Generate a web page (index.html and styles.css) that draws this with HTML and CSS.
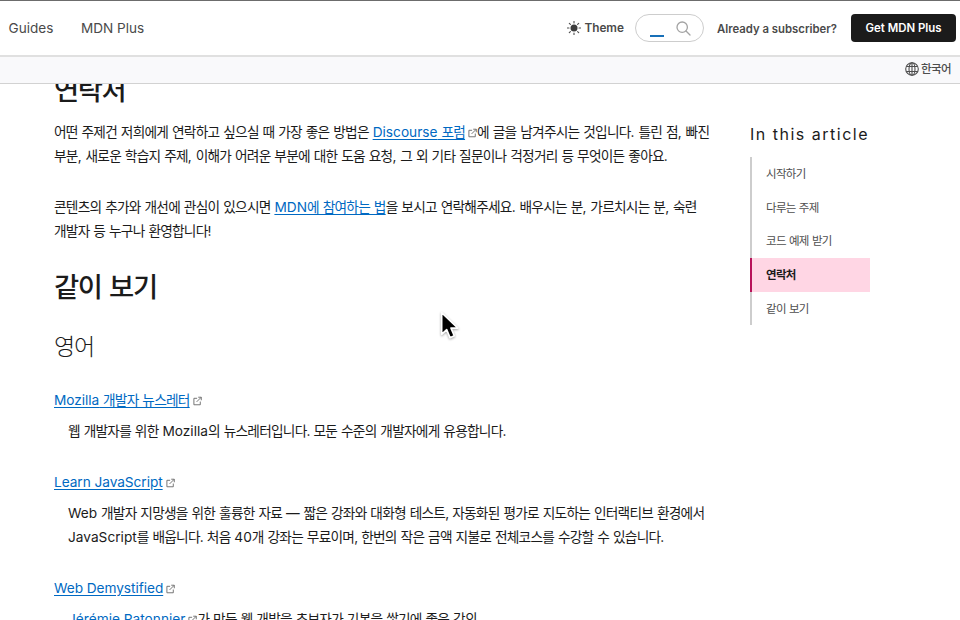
FILE: index.html
```
<!DOCTYPE html>
<html lang="ko">
<head>
<meta charset="utf-8">
<title>MDN Web Docs</title>
<link rel="stylesheet" href="styles.css">
</head>
<body>
<svg class="defs" width="0" height="0" aria-hidden="true">
  <symbol id="ext" viewBox="0 0 10 10"><path d="M4.6 2H1v7.2h7.1V5.6M5.8.8h3.4v3.4M9 1 4 6" fill="none" stroke="#686868" stroke-width="1"/></symbol>
</svg>
<header class="top">
  <nav class="nav"><a>Guides</a><a>MDN Plus</a></nav>
  <div class="actions">
    <button class="theme">
      <svg width="14" height="14" viewBox="0 0 14 14"><circle cx="7" cy="7" r="3.5" fill="#3d3d3d"/><path d="M7 .3v1.7M7 12v1.7M.3 7H2M12 7h1.7M2.3 2.3l1.1 1.1M10.6 10.6l1.1 1.1M2.3 11.7l1.1-1.1M10.6 3.4l1.1-1.1" stroke="#4e4e4e" stroke-width="1.1" stroke-linecap="round"/></svg>
      <span>Theme</span>
    </button>
    <div class="search"><i class="caret"></i>
      <svg width="15" height="15" viewBox="0 0 15 15" fill="none" stroke="#a3a3a3" stroke-width="1.3" stroke-linecap="round"><circle cx="6.2" cy="6.2" r="5.2"/><path d="m10 10 4 4"/></svg>
    </div>
    <a class="login">Already a subscriber?</a>
    <a class="cta">Get MDN Plus</a>
  </div>
</header>
<div class="langbar">
  <svg width="14" height="14" viewBox="0 0 14 14" fill="none" stroke="#4e4e4e" stroke-width="1.1"><circle cx="7" cy="7" r="6.3"/><ellipse cx="7" cy="7" rx="3" ry="6.3"/><path d="M7 .7v12.6M1.4 4.5h11.2M1.4 9.5h11.2"/></svg>
  <span>한국어</span>
</div>
<main class="page">
  <article class="article">
    <h2 class="first">연락처</h2>
    <p>어떤 주제건 저희에게 연락하고 싶으실 때 가장 좋은 방법은 <a><span class="en">Discourse</span> 포럼</a><svg class="ext"><use href="#ext"/></svg>에 글을 남겨주시는 것입니다<span class="en">.</span> 틀린 점<span class="en">,</span> 빠진<br>부분<span class="en">,</span> 새로운 학습지 주제<span class="en">,</span> 이해가 어려운 부분에 대한 도움 요청<span class="en">,</span> 그 외 기타 질문이나 걱정거리 등 무엇이든 좋아요<span class="en">.</span></p>
    <p>콘텐츠의 추가와 개선에 관심이 있으시면 <a><span class="en">MDN</span>에 참여하는 법</a>을 보시고 연락해주세요<span class="en">.</span> 배우시는 분<span class="en">,</span> 가르치시는 분<span class="en">,</span> 숙련<br>개발자 등 누구나 환영합니다<span class="en">!</span></p>
    <h2>같이 보기</h2>
    <h3>영어</h3>
    <dl>
      <dt><a><span class="en">Mozilla</span> 개발자 뉴스레터</a><svg class="ext"><use href="#ext"/></svg></dt>
      <dd>웹 개발자를 위한 <span class="en">Mozilla</span>의 뉴스레터입니다. 모둔 수준의 개발자에게 유용합니다.</dd>
      <dt><a><span class="en">Learn JavaScript</span></a><svg class="ext"><use href="#ext"/></svg></dt>
      <dd><span class="en">Web</span> 개발자 지망생을 위한 훌륭한 자료 <span class="en">—</span> 짧은 강좌와 대화형 테스트, 자동화된 평가로 지도하는 인터랙티브 환경에서<br><span class="en">JavaScript</span>를 배웁니다. 처음 <span class="en">40</span>개 강좌는 무료이며, 한번의 작은 금액 지불로 전체코스를 수강할 수 있습니다.</dd>
      <dt><a><span class="en">Web Demystified</span></a><svg class="ext"><use href="#ext"/></svg></dt>
      <dd><a><span class="en">Jérémie Patonnier</span></a><svg class="ext"><use href="#ext"/></svg>가 만든 웹 개발을 초보자가 기본을 쌓기에 좋은 강의.</dd>
    </dl>
  </article>
  <aside class="toc">
    <h4>In this article</h4>
    <ul>
      <li>시작하기</li>
      <li>다루는 주제</li>
      <li>코드 예제 받기</li>
      <li class="current">연락처</li>
      <li>같이 보기</li>
    </ul>
  </aside>
</main>
<svg class="cursor" width="24" height="36" viewBox="0 0 24 36"><path d="M2 2v26l6-5.6 4 9.6 5.2-2.2-4-9.3h8.3z" fill="#000" stroke="#fff" stroke-width="2" stroke-linejoin="round"/></svg>
</body>
</html>
```
FILE: styles.css
```
* { box-sizing: border-box; }
body {
  margin: 0;
  height: 620px;
  overflow: hidden;
  display: flex;
  flex-direction: column;
  background: #fff;
  color: #1b1b1b;
  font: 400 13.7px/24px Inter, "Noto Sans CJK KR", sans-serif;
}
.defs { position: absolute; }
.top {
  flex: none;
  height: 57px;
  border-top: 1px solid #6c6c6c;
  border-bottom: 2px solid #e0e0e0;
  display: flex;
  justify-content: space-between;
  align-items: center;
  padding: 0 4px 0 8.5px;
  color: #4a4a4a;
}
.nav { display: flex; gap: 27.5px; font-size: 13.6px; }
.actions { display: flex; align-items: center; font-size: 11.8px; font-weight: 600; }
.theme {
  display: flex;
  align-items: center;
  gap: 3px;
  padding: 0;
  border: 0;
  margin: 0 11px 1px 0;
  background: none;
  color: inherit;
  font: inherit;
}
.search {
  width: 69px;
  height: 28px;
  border: 1px solid #cdcdcd;
  border-radius: 14px;
  display: flex;
  justify-content: space-between;
  align-items: center;
  padding: 0 12px 0 14px;
  margin-right: 13px;
}
.caret { width: 14px; height: 2px; background: #1870b8; margin-top: 15px; }
.login { margin: 1px 14px 0 0; font-size: 11.35px; }
.cta {
  width: 105px;
  height: 28px;
  border-radius: 4px;
  background: #1b1b1b;
  color: #fff;
  text-align: center;
  font-size: 11.4px;
  line-height: 29px;
}
.langbar {
  flex: none;
  height: 27px;
  background: #f9f9fb;
  border-bottom: 1px solid #d2d2d2;
  display: flex;
  justify-content: flex-end;
  align-items: center;
  gap: 2px;
  padding: 0 9px 2px 0;
  color: #4e4e4e;
  font-size: 11.5px;
  font-weight: 500;
  letter-spacing: -.6px;
}
.page { flex: 1; min-height: 0; overflow: hidden; display: flex; padding-left: 54px; white-space: nowrap; }
.article { width: 696px; letter-spacing: -.76px; word-spacing: .76px; }
.en { letter-spacing: 0; word-spacing: 0; }
h2, h3, h4, p, dl, dd, ul { margin: 0; padding: 0; }
h2 { font-size: 27.4px; line-height: 34px; font-weight: 500; letter-spacing: -1.4px; word-spacing: 1.6px; margin: 27px 0; }
h2.first { margin: -11px 0 13px; }
h3 { font-size: 23px; line-height: 30px; font-weight: 200; letter-spacing: -1.2px; padding-top: 1px; margin-bottom: 26px; }
p + p { margin-top: 27px; }
a { color: #0069c2; }
.top a { color: inherit; }
.top .cta { color: #fff; }
.article a { text-decoration: underline; text-underline-offset: 2px; }
dt .en { letter-spacing: -.06px; }
.ext { width: 9px; height: 10px; margin-left: 3px; vertical-align: -1px; }
dd { padding-left: 14px; margin: 7px 0 27px; }
.toc { width: 120px; padding-top: 38px; }
.toc h4 { font-size: 16px; line-height: 24px; font-weight: 400; letter-spacing: 1.5px; margin-bottom: 11px; }
.toc ul { list-style: none; font-size: 11.5px; letter-spacing: -.7px; word-spacing: .7px; color: #4e4e4e; }
.toc li { height: 33.7px; line-height: 35.7px; border-left: 2px solid #cdcdcd; padding-left: 14px; }
.toc .current { border-color: #b8125a; background: #ffd6e4; color: #1b1b1b; font-weight: 600; }
.cursor { position: absolute; left: 440px; top: 309px; width: 20px; height: 34px; filter: drop-shadow(0 1px 1px rgba(0,0,0,.35)); }
```
